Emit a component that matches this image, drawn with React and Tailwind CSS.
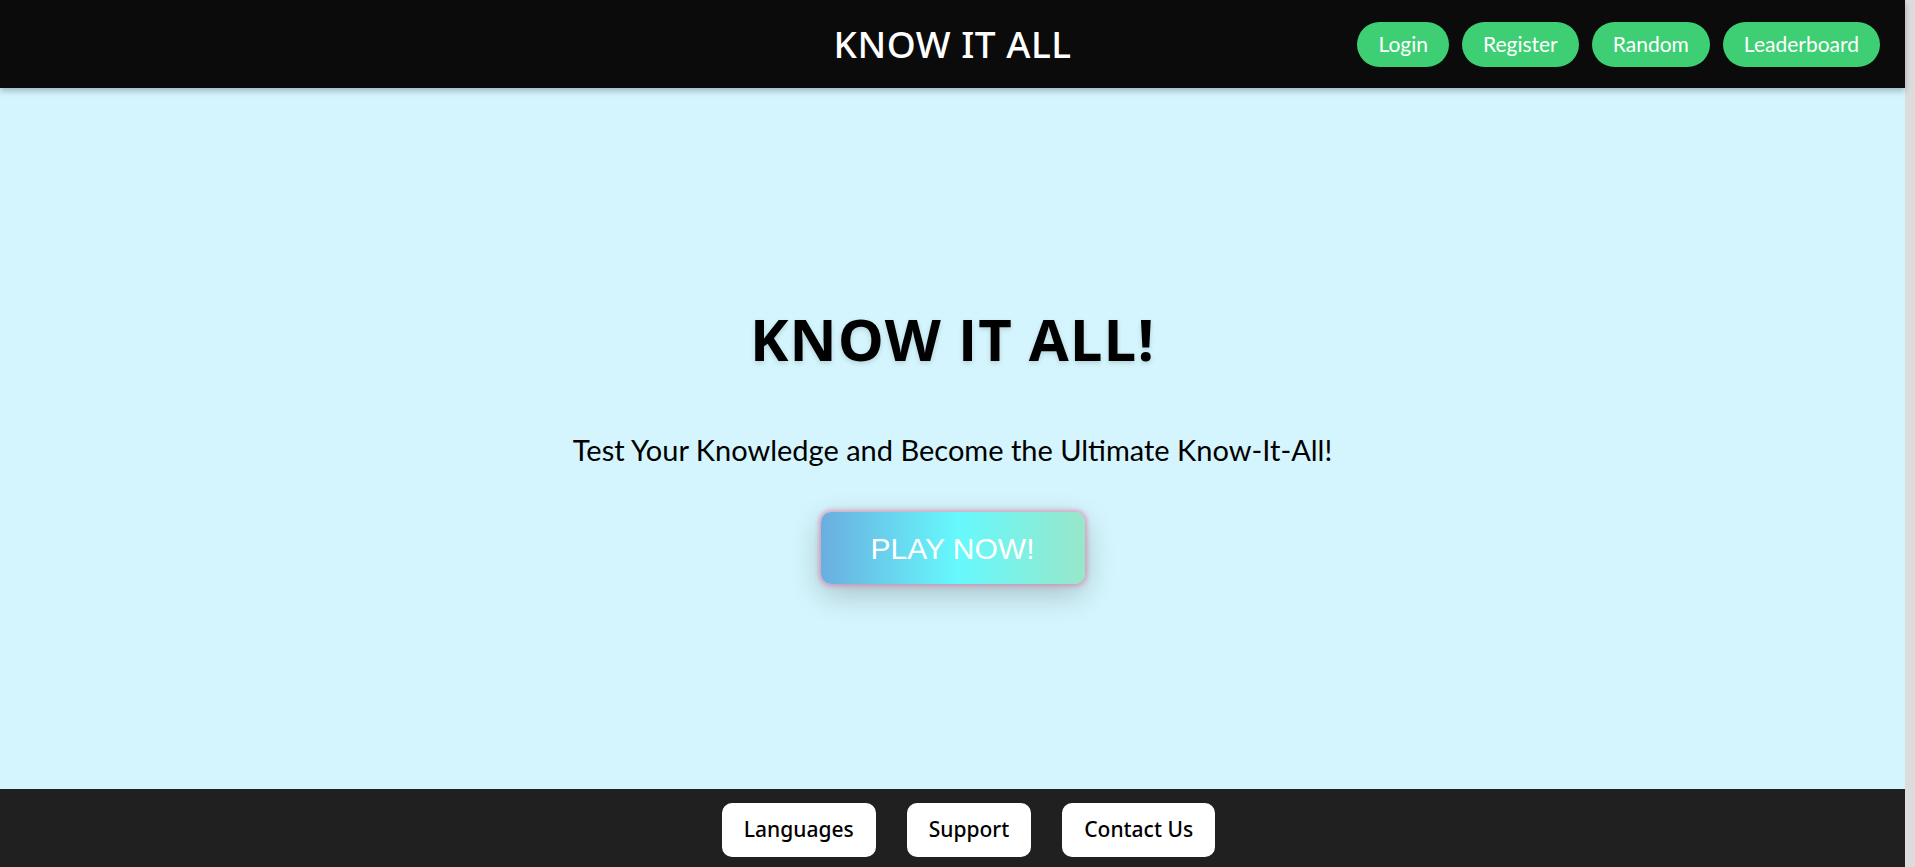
import React from 'react';

const navLinks = ['Login', 'Register', 'Random', 'Leaderboard'];
const footerLinks = ['Languages', 'Support', 'Contact Us'];

const Header = () => (
  <header className="relative z-10 h-[88px] bg-[#0b0b0b] grid grid-cols-[1fr_auto_1fr] items-center shadow-[0_3px_6px_rgba(0,0,0,0.25)]">
    <div />
    <h1 className="text-white text-[37px] font-medium tracking-[0.5px] font-['Noto_Sans',sans-serif]">KNOW IT ALL</h1>
    <nav className="flex justify-end gap-[13px] pr-[25px] font-['Lato',sans-serif]">
      {navLinks.map((link) => (
        <a
          key={link}
          href="#"
          className="h-[45px] px-[21px] flex items-center rounded-full bg-[#3ecf74] text-white text-[21px]"
        >
          {link}
        </a>
      ))}
    </nav>
  </header>
);

const Hero = () => (
  <main className="h-[701px] bg-[#d4f5fd] flex flex-col items-center pt-[216px]">
    <h2 className="text-black text-[58px] leading-[1.2] font-bold tracking-[1px] font-['Open_Sans',sans-serif] [text-shadow:0_2px_5px_rgba(0,0,0,0.15)]">
      KNOW IT ALL!
    </h2>
    <p className="mt-[54px] text-black text-[29px] font-['Lato',sans-serif]">
      Test Your Knowledge and Become the Ultimate Know-It-All!
    </p>
    <button className="mt-[41px] w-[264px] h-[72px] rounded-[10px] bg-[linear-gradient(90deg,#6aaedf_0%,#66f9fd_52%,#98e7c9_100%)] text-white text-[30px] font-['Liberation_Sans',sans-serif] shadow-[0_0_4px_2px_rgba(225,115,160,0.6),0_10px_30px_rgba(0,0,0,0.22)]">
      PLAY NOW!
    </button>
  </main>
);

const Footer = () => (
  <footer className="bg-[#202020] py-[14px] pl-[32px] flex justify-center gap-[31px] font-['Noto_Sans',sans-serif]">
    {footerLinks.map((link) => (
      <a
        key={link}
        href="#"
        className="h-[54px] px-[22px] flex items-center rounded-[10px] bg-white text-black text-[21px] font-medium"
      >
        {link}
      </a>
    ))}
  </footer>
);

export default function App() {
  return (
    <div className="min-h-screen bg-[#dcdcdc]">
      <div className="w-[1905px]">
        <Header />
        <Hero />
        <Footer />
      </div>
    </div>
  );
}
